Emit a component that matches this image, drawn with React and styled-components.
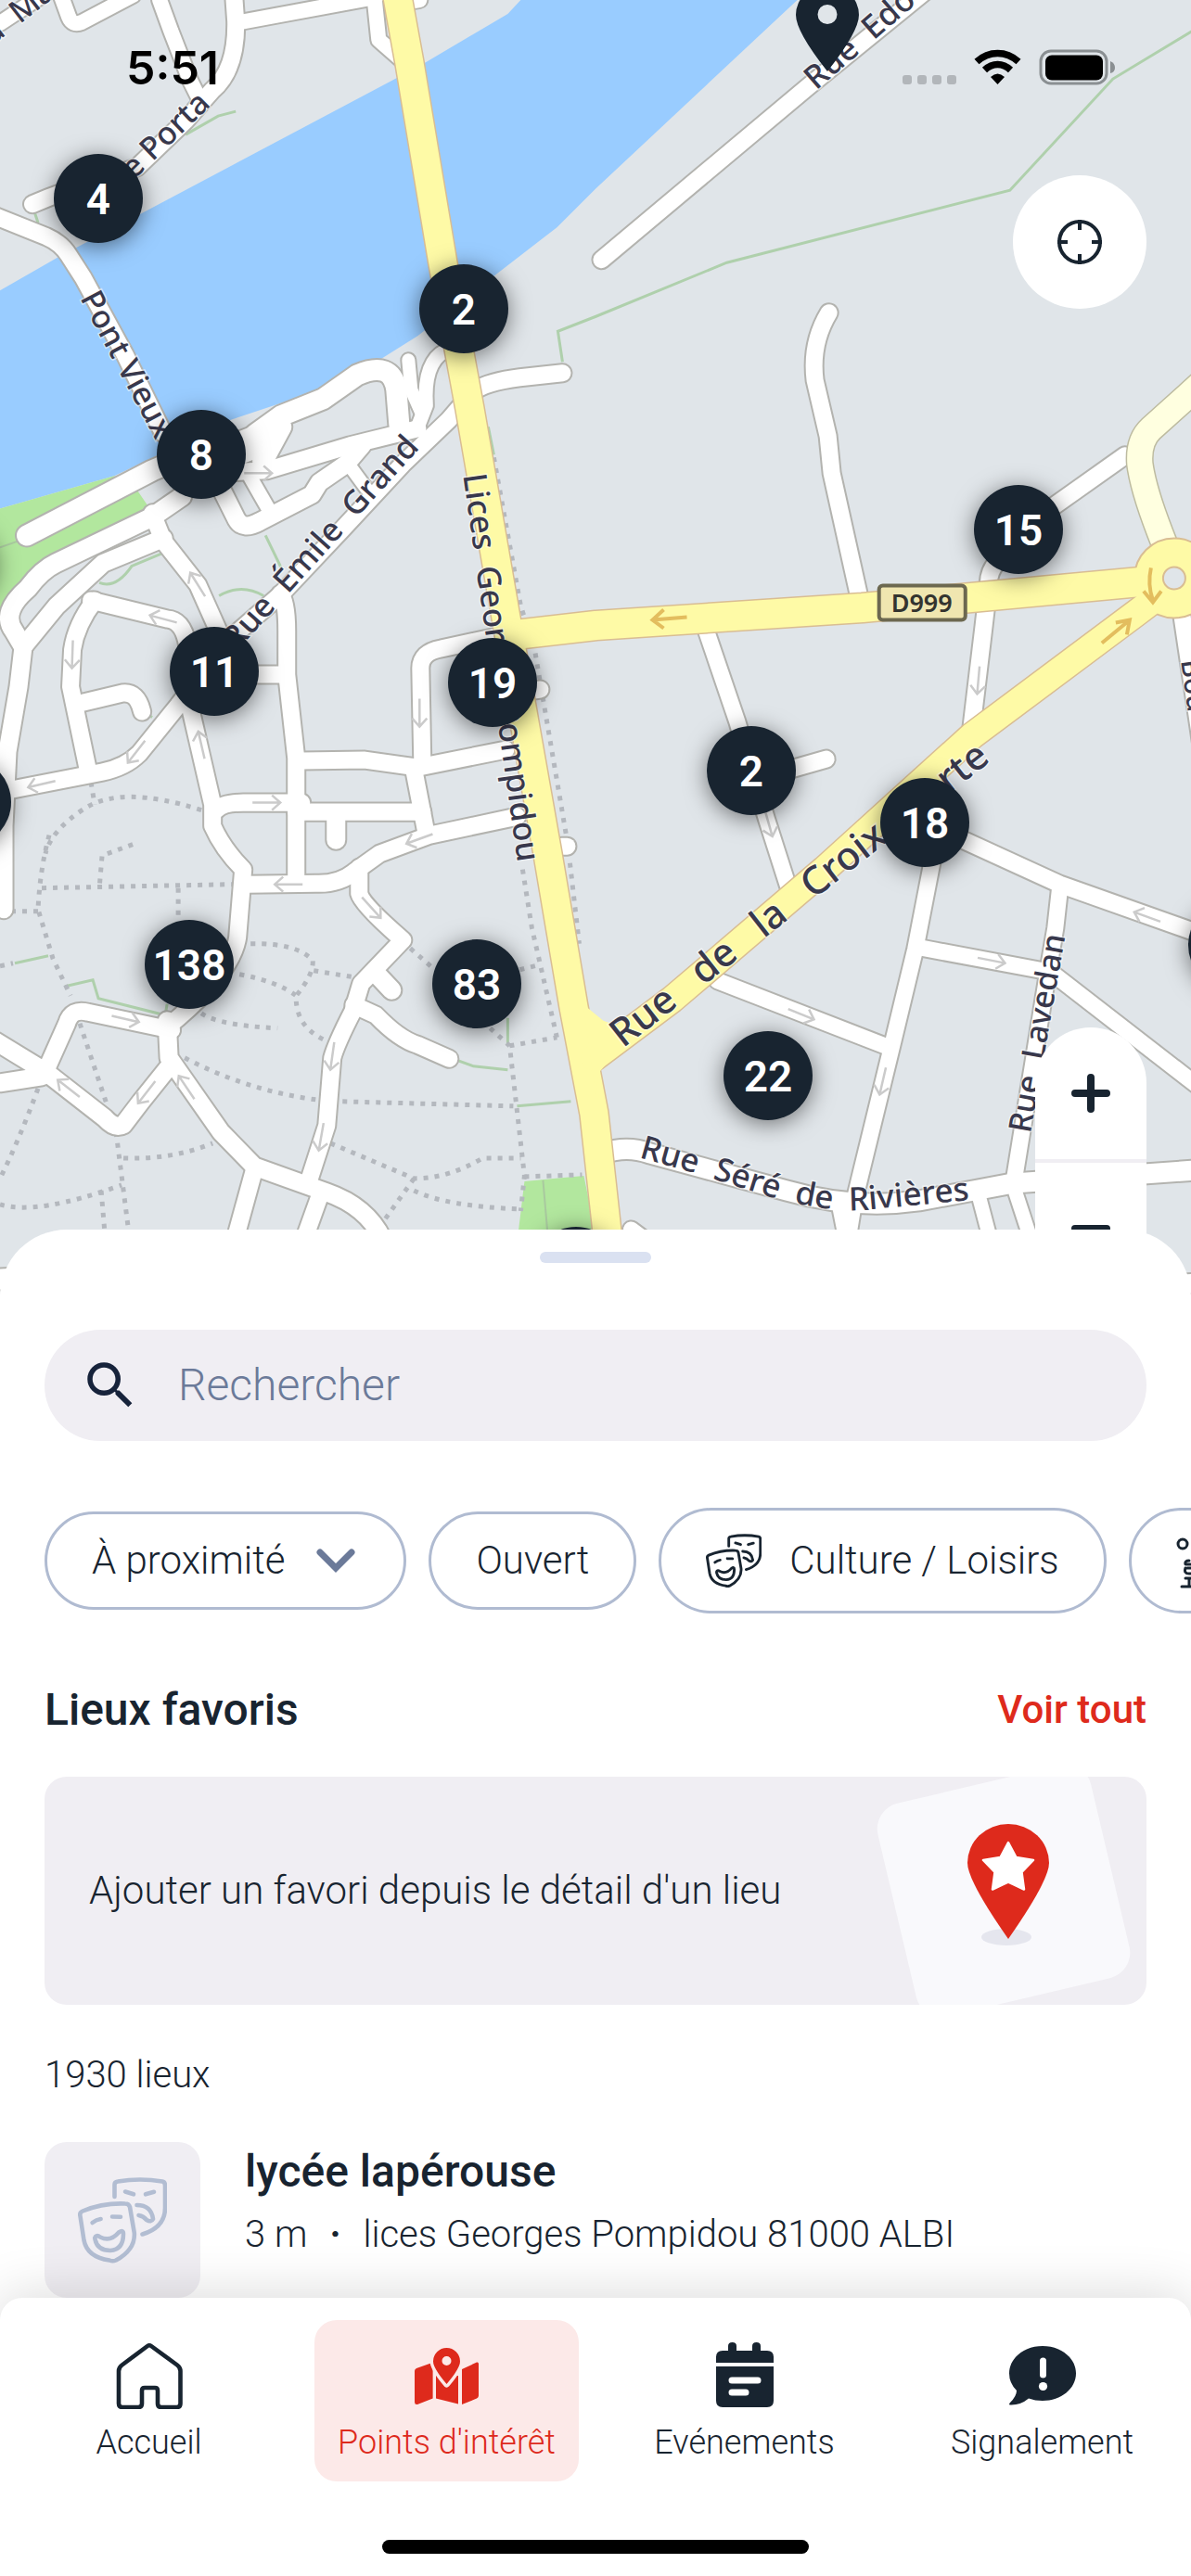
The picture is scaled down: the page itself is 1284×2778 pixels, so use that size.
import React from 'react';
import styled, { createGlobalStyle } from 'styled-components';
import { MdSearch } from 'react-icons/md';

const color = {
  ink: '#182430',
  red: '#de2a1c',
  blush: '#fce9e8',
  haze: '#f0eef3',
  line: '#b0bbd1',
  slate: '#6b7a99',
  land: '#e0e5e9',
  water: '#99ccff',
  park: '#b2e79e',
};

const GlobalStyle = createGlobalStyle`
  * { box-sizing: border-box; }
  body { margin: 0; background: #fff; }
  body, button, input {
    font-family: Roboto, "Liberation Sans", sans-serif;
    font-weight: 300;
    color: ${color.ink};
  }
  button { padding: 0; border: 0; background: none; cursor: pointer; }
`;

const Page = styled.div`
  display: flex;
  flex-direction: column;
  height: 100vh;
  overflow: hidden;
`;

/* ---------- map ---------- */

const MapArea = styled.section`
  position: relative;
  flex: 1 1 0;
  min-height: 0;
  margin-bottom: -72px;
  overflow: hidden;
  background: ${color.land};
`;

const MapSvg = styled.svg`
  display: block;
  width: 100%;
  height: 100%;
`;

const Cluster = styled.button`
  position: absolute;
  left: ${(p) => p.$x}px;
  top: ${(p) => p.$y}px;
  width: 96px;
  height: 96px;
  margin: -48px 0 0 -48px;
  padding-top: 2px;
  border-radius: 50%;
  background: ${color.ink};
  color: #fff;
  font-size: 46px;
  line-height: 94px;
  font-weight: 600;
  box-shadow: 0 4px 24px rgba(0, 0, 0, 0.5);
`;

const PinMarker = styled.button`
  position: absolute;
  left: 858px;
  top: -14px;
  width: 68px;
  height: 91px;
  svg { display: block; }
`;

const Overlay = styled.div`
  position: absolute;
  inset: 0;
  display: flex;
  flex-direction: column;
  align-items: flex-end;
`;

const StatusBar = styled.div`
  display: flex;
  align-items: center;
  justify-content: space-between;
  width: 100%;
  height: 146px;
  padding: 0 82px 0 136px;
`;

const Clock = styled.time`
  font: 600 50px/60px Inter, sans-serif;
  color: #000;
`;

const LocateButton = styled.button`
  display: grid;
  place-items: center;
  width: 144px;
  height: 144px;
  margin: 43px 48px 0 0;
  border-radius: 50%;
  background: #fff;
`;

const ZoomControl = styled.div`
  display: flex;
  flex-direction: column;
  width: 120px;
  margin: auto 48px 2px 0;
  border-radius: 60px;
  background: #fff;
  overflow: hidden;
`;

const ZoomButton = styled.button`
  display: grid;
  place-items: center;
  height: 142px;
  & + & {
    height: 146px;
    border-top: 4px solid ${color.haze};
  }
`;

/* ---------- sheet ---------- */

const Sheet = styled.main`
  position: relative;
  flex: none;
  padding: 24px 48px 0;
  border-radius: 72px 72px 0 0;
  background: #fff;
`;

const Handle = styled.div`
  width: 120px;
  height: 12px;
  margin: 0 auto 72px;
  border-radius: 6px;
  background: #dae1f1;
`;

const SearchField = styled.label`
  display: flex;
  align-items: center;
  gap: 40px;
  height: 120px;
  padding: 0 48px 0 38px;
  border-radius: 60px;
  background: ${color.haze};
  svg { flex: none; fill: #17233b; }
`;

const SearchInput = styled.input`
  flex: 1;
  min-width: 0;
  padding: 0;
  border: 0;
  outline: 0;
  background: none;
  font-size: 48px;
  line-height: 60px;
  &::placeholder { color: ${color.slate}; opacity: 1; }
`;

const Chips = styled.div`
  display: flex;
  align-items: center;
  gap: 24px;
  margin: 72px -48px 0 0;
  overflow: hidden;
`;

const Chip = styled.button`
  display: flex;
  flex: none;
  align-items: center;
  gap: 30px;
  height: ${(p) => (p.$tall ? 114 : 106)}px;
  padding: 0 48px;
  border: 3px solid ${color.line};
  border-radius: 57px;
  background: #fff;
  font-size: 42px;
  line-height: 56px;
  svg { flex: none; }
`;

const SectionHead = styled.div`
  display: flex;
  align-items: center;
  justify-content: space-between;
  margin-top: 72px;
`;

const Heading = styled.h2`
  margin: 0;
  font-size: 48px;
  line-height: 64px;
  font-weight: 500;
`;

const SeeAll = styled.a`
  color: ${color.red};
  font-size: 42px;
  line-height: 56px;
  font-weight: 500;
  text-decoration: none;
`;

const FavouriteCard = styled.div`
  display: flex;
  align-items: center;
  justify-content: space-between;
  height: 246px;
  margin-top: 40px;
  padding-left: 48px;
  border-radius: 24px;
  background: ${color.haze};
  overflow: hidden;
  font-size: 42px;
  line-height: 56px;
  svg { flex: none; }
`;

const Count = styled.p`
  margin: 48px 0 44px;
  font-size: 40px;
  line-height: 56px;
`;

const Place = styled.article`
  display: flex;
  gap: 48px;
`;

const Thumb = styled.div`
  display: grid;
  place-items: center;
  width: 168px;
  height: 168px;
  border-radius: 24px;
  background: ${color.haze};
`;

const PlaceInfo = styled.div`
  display: flex;
  flex-direction: column;
  gap: 12px;
  padding-top: 4px;
`;

const PlaceName = styled.h3`
  margin: 0;
  font-size: 48px;
  line-height: 56px;
  font-weight: 500;
`;

const PlaceMeta = styled.p`
  display: flex;
  gap: 24px;
  margin: 0;
  font-size: 40px;
  line-height: 56px;
`;

const Separator = styled.span`
  font-weight: 700;
`;

/* ---------- tab bar ---------- */

const TabBar = styled.nav`
  position: relative;
  flex: none;
  padding: 24px 0;
  border-radius: 24px 24px 0 0;
  background: #fff;
  box-shadow: 0 0 60px rgba(0, 0, 0, 0.16);
`;

const Tabs = styled.div`
  display: grid;
  grid-template-columns: repeat(4, 1fr);
`;

const Tab = styled.a`
  display: flex;
  flex-direction: column;
  align-items: center;
  gap: 12px;
  height: 174px;
  margin: 0 18px;
  padding-top: 24px;
  border-radius: 24px;
  background: ${(p) => (p.$active ? color.blush : 'transparent')};
  color: ${(p) => (p.$active ? color.red : color.ink)};
  font-size: 36px;
  line-height: 48px;
  text-decoration: none;
  white-space: nowrap;
`;

const HomeIndicator = styled.div`
  width: 460px;
  height: 15px;
  margin: 63px auto 0;
  border-radius: 8px;
  background: #000;
`;

/* ---------- map data ---------- */

const streets = [
  [16, 'M0 25L50 -8'],
  [16, 'M66 -4L74 18Q78 28 88 24L143 -5'],
  [16, 'M172 0L184 33L205 87L214 105'],
  [18, 'M252 -5L254 23Q255 75 229 97L200 130L148 180L100 197Q70 205 35 220'],
  [16, 'M258 24L405 -3'],
  [16, 'M403 -5L408 43L432 64'],
  [16, 'M440 2L452 0'],
  [18, 'M-5 233L50 255Q66 262 74 275L90 300L135 383L176 467L216 490'],
  [34, 'M240 490L283 473'],
  [22, 'M275 468L303 448L348 430L385 404Q422 388 427 420L430 457'],
  [22, 'M283 497L303 460'],
  [14, 'M440 388L443 420L455 447'],
  [15, 'M480 378Q456 390 459 437L450 460'],
  [18, 'M606 402L560 407Q520 412 508 424L483 453L434 500L369 570L303 640L246 690L192 760L150 812Q135 827 110 832L2 853'],
  [18, 'M225 510L287 507L377 480L450 462'],
  [22, 'M29 577L164 507L216 485'],
  [14, 'M373 497L395 527'],
  [19, 'M240 530L255 560Q262 572 280 562L336 533L344 520L373 500L390 480'],
  [15, 'M270 515L293 555'],
  [20, 'M196 535L164 557L60 607Q45 614 30 634Q0 660 15 680L25 697'],
  [19, 'M176 580L111 607L61 653L25 697L20 740L8 810L4 890L4 980'],
  [18, 'M164 553L176 583L213 630L242 695'],
  [18, 'M98 647L180 667Q197 668 202 695'],
  [18, 'M102 647Q82 673 78 700L76 740L94 826'],
  [18, 'M90 757L132 747Q148 745 153 767'],
  [18, 'M205 763L229 867L229 890Q240 915 262 937L256 1010Q250 1050 180 1107'],
  [18, 'M302 640Q309 648 309 680L309 727L319 817L319 947'],
  [18, 'M270 727L307 727'],
  [18, 'M325 820L393 819L450 827L545 808'],
  [18, 'M233 873Q240 865 262 865L325 865'],
  [18, 'M319 875L455 875'],
  [20, 'M362 880L362 905'],
  [18, 'M540 685L475 699Q453 703 453 720L455 822'],
  [18, 'M446 830L459 897'],
  [18, 'M557 880L463 900L409 920L381 940Q365 953 340 952L266 953'],
  [18, 'M387 935L387 963Q390 975 434 1013L389 1060L380 1090Q362 1125 358 1140L352 1213L332 1275'],
  [20, 'M406 1050L422 1067'],
  [18, 'M381 1083L405 1094Q430 1120 450 1126L484 1141'],
  [19, 'M180 1100L182 1140L238 1220L274 1257L352 1285Q395 1300 412 1335'],
  [18, 'M274 1260L252 1340'],
  [18, 'M344 1290L326 1340'],
  [18, 'M185 1110L95 1091Q77 1086 72 1103L51 1150'],
  [19, 'M184 1147L152 1187L133 1212Q124 1217 113 1205L49 1155L-5 1122'],
  [19, 'M0 1167L45 1160'],
  [22, 'M-10 1379L30 1377'],
  [20, 'M1265 1384L1300 1382'],
  [18, 'M648 280L871 93L1000 -12'],
  [18, 'M893 337Q873 370 878 410L892 470L896 510L926 645'],
  [18, 'M1212 491L1133 547L1075 605Q1065 615 1065 630L1060 673L1046 790'],
  [17, 'M761 680L794 777L826 883L849 955'],
  [18, 'M820 838L890 818'],
  [18, 'M1000 888L1142 953L1300 1009'],
  [17, 'M1006 920L986 1023L961 1127L920 1295L912 1345'],
  [17, 'M990 1021L1129 1047'],
  [17, 'M1142 955L1137 1000L1129 1047L1092 1275'],
  [17, 'M1130 1046L1290 1170'],
  [17, 'M773 1057L956 1128'],
  [21, 'M650 1243Q675 1234 700 1243L847 1283Q920 1304 990 1294L1092 1275L1290 1261'],
  [15, 'M1054 1287L1068 1340'],
  [15, 'M1094 1285L1112 1340'],
  [17, 'M905 1300L914 1345'],
  [17, 'M680 1325L700 1340'],
  [18, 'M1273 660L1294 800'],
  [18, 'M575 744L582 743'],
  [18, 'M605 912L611 912'],
];

const footpaths = [
  'M45 957L250 953', 'M53 900Q43 937 41 980L57 1033L76 1073',
  'M98 843L102 867', 'M217 873Q130 845 90 872Q55 895 49 920',
  'M143 910L110 922L107 957', 'M192 957L192 990', 'M12 982L41 982',
  'M270 1017Q320 1016 337 1035Q338 1050 319 1073Q318 1105 348 1120',
  'M258 1050Q300 1058 319 1073', 'M338 1046L381 1053', 'M217 1092Q235 1105 299 1108',
  'M199 1140Q266 1175 340 1185', 'M369 1187L553 1192', 'M442 1022L465 1042',
  'M528 1108L549 1127L565 1267L561 1305', 'M549 1127L600 1118',
  'M563 937L573 1000L600 1118', 'M614 930L624 1017', 'M532 493L561 653L576 700L610 900',
  'M86 1103L115 1190', 'M41 1173Q20 1230 0 1270', 'M125 1220L139 1330',
  'M133 1248Q185 1250 229 1232', 'M0 1298Q40 1310 131 1277', 'M109 1283L113 1330',
  'M356 1232L446 1270Q483 1270 520 1248L561 1248', 'M446 1270L414 1315',
  'M446 1283Q480 1300 561 1303', 'M565 1268L627 1266', 'M560 1045L580 1040', 'M0 1041L14 1038',
];

const hedges = [
  'M606 390L601 357L642 341L783 283L1088 205L1199 85L1290 30',
  'M200 145L235 125L254 120', 'M36 225L41 240', 'M526 460L532 490',
  'M286 577L303 612', 'M236 642Q260 628 284 642', 'M107 628Q125 635 142 610L178 595',
  'M16 1038L52 1030', 'M70 1063L100 1056L106 1076L178 1094L180 1082',
  'M491 1142L510 1149L547 1153', 'M557 1192L615 1187', 'M547 1097L547 1125', 'M155 768L164 773',
];

const oneWay = [
  [45, 845, 167], [78, 705, 92], [176, 667, 195], [213, 630, 238], [452, 768, 90],
  [287, 865, 0], [452, 904, 160], [311, 953, 180], [400, 978, 48], [135, 1098, 13],
  [358, 1138, 98], [346, 1225, 100], [201, 1172, 236], [158, 1177, 128], [74, 1173, 218],
  [217, 803, 257], [147, 810, 128], [278, 510, 0], [1068, 1035, 11], [863, 1093, 22],
  [951, 1165, 103], [1236, 988, 200], [1054, 733, 95], [828, 887, 74],
];

const labels = [
  [-8, 49, -38, 34, 'a  Ma'],
  [113, 224, -44, 34, 'Rue Porta'],
  [86, 321, 62, 34, 'Pont Vieux'],
  [255, 702, -48, 35, 'Rue  Émile  Grand'],
  [499, 512, 82, 35, 'Lices  Georges Pompidou'],
  [671, 1130, -38, 42, 'Rue   de   la   Croix   Verte'],
  [1110, 1222, -80, 34, 'Rue  Lavedan'],
  [879, 98, -41, 35, 'Rue  Edouard'],
  [1272, 712, 82, 30, 'Bou'],
];

const clusters = [
  [106, 214, '4'], [500, 333, '2'], [217, 490, '8'], [231, 724, '11'], [531, 736, '19'],
  [1098, 571, '15'], [810, 831, '2'], [997, 887, '18'], [204, 1040, '138'],
  [514, 1061, '83'], [828, 1160, '22'], [-36, 865, ''], [-52, 607, ''], [1329, 1019, ''], [621, 1371, ''],
];

const MapLabel = styled.text`
  font-family: "Noto Sans", "Open Sans", sans-serif;
  font-weight: 500;
  white-space: pre;
  fill: #38384c;
  stroke: rgba(255, 255, 255, 0.5);
  stroke-width: 3px;
  paint-order: stroke;
`;

function CityMap() {
  const yellow = [
    [30, 'M427 -10L441 67L477 283L506 440L545 665L590 920L618 1085L640 1200L662 1400'],
    [31, 'M555 684L642 674L929 655L1250 625'],
    [28, 'M1262 632L1225 660L1047 793L888 937L724 1077L640 1140'],
  ];
  return (
    <MapSvg viewBox="0 0 1284 1397" preserveAspectRatio="xMinYMin slice" aria-hidden="true">
      <rect width="1284" height="1397" fill={color.land} />
      <path fill={color.water} d="M0 313L61 278L156 228L422 87L459 67L547 15L561 0H859L642 203L600 245L534 296L450 362L407 389L340 422L250 452L123 513L0 548Z" />
      <path fill={color.park} d="M0 548L123 513L147 527L160 546L41 620L5 660L0 676Z" />
      <path fill={color.park} d="M565 1273L629 1267L655 1397H550Z" />
      <path d="M585 1272L590 1330M0 590L20 583" stroke="#a9c99f" strokeWidth="2" fill="none" />
      <g fill="none" stroke="#afd0ac" strokeWidth="3">
        {hedges.map((d) => <path key={d} d={d} />)}
      </g>
      <g fill="none" stroke="#b4b8be" strokeWidth="5" strokeDasharray="5 7">
        {footpaths.map((d) => <path key={d} d={d} />)}
      </g>
      <g fill="none" strokeLinecap="round" strokeLinejoin="round">
        {streets.map(([w, d]) => <path key={d} d={d} stroke="#b3b3af" strokeWidth={w + 4} />)}
        {streets.map(([w, d]) => <path key={d} d={d} stroke="#fff" strokeWidth={w} />)}
        <path d="M1300 408L1240 462Q1226 475 1228 500Q1232 530 1254 585" stroke="#bdbba0" strokeWidth="30" />
        <path d="M1300 408L1240 462Q1226 475 1228 500Q1232 530 1254 585" stroke="#ffffe0" strokeWidth="27" />
        {yellow.map(([w, d]) => <path key={d} d={d} stroke="#d9bd93" strokeWidth={w + 3} />)}
        <circle cx="1265" cy="623" r="43" fill="#fefaa6" stroke="#d9bd93" strokeWidth="2" />
        {yellow.map(([w, d]) => <path key={d} d={d} stroke="#fefaa6" strokeWidth={w} />)}
      </g>
      <path d="M628 1082L650 1100L684 1112L645 1156L642 1180Z" fill="#fefaa6" />
      <circle cx="1265" cy="623" r="12" fill={color.land} stroke="#d9bd93" strokeWidth="2" />
      <g fill="none" stroke="#cbcbcb" strokeWidth="2.5">
        {oneWay.map(([x, y, a]) => (
          <path key={`${x}-${y}`} transform={`translate(${x} ${y}) rotate(${a})`} d="M-15 0H15M6 -8L15 0L6 8" />
        ))}
      </g>
      <g fill="none" stroke="#e3bd5e" strokeWidth="4">
        <path d="M740 665L703 668M715 657L703 668L715 677" />
        <path d="M1187 693L1216 669M1202 671L1217 668L1214 684" />
        <path d="M1240 612Q1236 630 1242 647M1232 637L1242 649L1251 637" />
      </g>
      {labels.map(([x, y, a, size, text]) => (
        <MapLabel key={text} fontSize={size} transform={`translate(${x} ${y}) rotate(${a})`}>{text}</MapLabel>
      ))}
      <path id="sere" fill="none" d="M688 1247L748 1264L834 1291Q890 1306 929 1304L1080 1290" />
      <MapLabel fontSize="35"><textPath href="#sere">Rue  Séré  de  Rivières</textPath></MapLabel>
      <rect x="947" y="631" width="93" height="37" rx="4" fill="#f0e6b0" stroke="#6c6850" strokeWidth="4" />
      <text x="993" y="660" textAnchor="middle" fontFamily="Noto Sans, sans-serif" fontWeight="600" fontSize="27" fill="#33332f">D999</text>
    </MapSvg>
  );
}

/* ---------- icons ---------- */

const Masks = ({ size, stroke }) => (
  <svg width={size} height={size} viewBox="0 0 96 92" fill="none" stroke={stroke} strokeWidth="4.6" strokeLinecap="round" strokeLinejoin="round">
    <path d="M39.500 21V8Q39.500 5 43 4.500Q67 .5 91 4.500Q94 5 94 9V33Q94 54 69.500 61.500" />
    <path d="M51 15.500L60 18.300M73 18.300L82 15.800" />
    <path d="M63.500 30Q79 30 81 45Q79 49 74 46Q71 42 65.500 41" />
    <path d="M2.500 42Q1.500 38 5 36.500Q27 27.500 51 28.500Q55 28.500 56 32L60.800 60Q62 78 41 89.500Q37.500 91 34 89.500Q10 86 6.500 68Z" />
    <path d="M15.600 49Q20 45.500 24.600 45M37 42.500L46 42.700" />
    <path d="M19 64Q21 62 24 64.500Q35 70 44 59.500Q49 56 49 61Q49 78 35 79Q21 79 18.500 67Q18 65 19 64Z" />
  </svg>
);

const Landmark = () => (
  <svg width="60" height="60" viewBox="0 0 60 60" fill="none" stroke={color.ink} strokeWidth="3" strokeLinecap="round" strokeLinejoin="round">
    <circle cx="7" cy="12" r="5" />
    <path d="M14 30Q9 30 10 34H24M12 38H24M10 38Q8 44 14 44H24M10 49H24M14 49V57M6 58H54" />
  </svg>
);

const Chevron = () => (
  <svg width="50" height="42" viewBox="5 0 50 42" fill="none" stroke={color.slate} strokeWidth="7" strokeLinecap="round">
    <path d="M13 12L30 29L47 12" />
  </svg>
);

const StatusIcons = () => (
  <svg width="229" height="40" viewBox="0 0 229 40" aria-label="Wi-Fi, batterie pleine" role="img">
    <g fill="#b2b6ba">
      <rect x="0" y="28" width="10" height="10" rx="3" />
      <rect x="16" y="28" width="10" height="10" rx="3" />
      <rect x="32" y="28" width="10" height="10" rx="3" />
      <rect x="48" y="28" width="10" height="10" rx="3" />
    </g>
    <g fill="none" stroke="#000" strokeWidth="7.5">
      <path d="M80 13.500Q90 4.500 102.500 4.500T125 13.500" />
      <path d="M88.500 22.500Q95 16.500 102.500 16.500T116.500 22.500" />
    </g>
    <path d="M102.500 38L95 30Q102.500 23 110 30Z" fill="#000" />
    <rect x="149" y="2" width="71" height="35" rx="11" fill="none" stroke="#8a8f92" strokeWidth="3" />
    <rect x="154" y="6.500" width="62" height="27" rx="7" fill="#000" />
    <path d="M224 13Q229 15 229 20T224 26Z" fill="#8a8f92" />
  </svg>
);

const FavouriteArt = () => (
  <svg width="308" height="246" viewBox="0 0 308 246" aria-hidden="true">
    <rect x="36" y="5" width="236" height="236" rx="28" fill="#f9f9fc" transform="rotate(-13.300 154 123)" />
    <ellipse cx="157" cy="173" rx="27" ry="9" fill="#e5e6ee" />
    <path d="M159 175Q115 112 115 93A44 42 0 0 1 203 93Q203 112 159 175Z" fill={color.red} />
    <path d="M159 71L167.500 87L186 90L173.500 103L176 121.500L159 113.500L142 121.500L144.500 103L132 90L150.500 87Z" fill="#fff" stroke="#fff" strokeWidth="2.500" strokeLinejoin="round" />
  </svg>
);

const HomeIcon = () => (
  <svg width="72" height="72" viewBox="0 0 72 72" fill="none" stroke="currentColor" strokeWidth="4.600" strokeLinejoin="round">
    <path d="M38 4L66 24.500Q69.500 27 69.500 31V66Q69.500 70 65.500 70H49Q45 70 45 66V52Q45 49 42 49H31Q28 49 28 52V66Q28 70 24 70H7Q3 70 3 66V31Q3 27 6.500 24.500L34 4Q36 2.500 38 4Z" />
  </svg>
);

const MapIcon = () => (
  <svg width="72" height="72" viewBox="-1 -6 72 72" fill="currentColor">
    <path d="M0 25Q0 23 2 22L17.500 16.500L19.600 18V54.500L3 61Q0 61.500 0 58.500ZM23 30H47V60.500L23 54.500ZM51 23L67 15.500Q69 15 69 17.500V51.500Q69 53.500 67 54.500L51 61Z" />
    <path d="M34.500 39Q20 22 20 14.500A14.500 14.500 0 0 1 49 14.500Q49 22 34.500 39Z" fill={color.blush} stroke={color.blush} strokeWidth="7" strokeLinejoin="round" />
    <path fillRule="evenodd" d="M34.500 39Q20 22 20 14.500A14.500 14.500 0 0 1 49 14.500Q49 22 34.500 39ZM34.500 9A5 5 0 1 0 34.500 19A5 5 0 1 0 34.500 9Z" />
  </svg>
);

const EventIcon = () => (
  <svg width="72" height="72" viewBox="0 0 72 72" fill="currentColor">
    <path d="M5 22V16Q5 9 12 9H18V4Q18 0 22.500 0T27 4V9H44V4Q44 0 48.500 0T53 4V9H60Q67 9 67 16V22ZM5 26H67V63Q67 70 60 70H12Q5 70 5 63Z" />
    <path d="M22 41H50M22 54H37" stroke="#fff" strokeWidth="7" strokeLinecap="round" />
  </svg>
);

const ReportIcon = () => (
  <svg width="72" height="72" viewBox="0 0 72 72" fill="currentColor">
    <path d="M36 4C56 4 72 17 72 33.500S56 63 36 63Q28 63 21 60.500Q12 68 1 67.500Q-1 67 1 65Q8 58 8 52Q0 44 0 33.500C0 17 16 4 36 4Z" />
    <path d="M36.500 20V35" stroke="#fff" strokeWidth="7" strokeLinecap="round" />
    <circle cx="36.500" cy="47.500" r="4.600" fill="#fff" />
  </svg>
);

const tabs = [
  { label: 'Accueil', Icon: HomeIcon },
  { label: "Points d'intérêt", Icon: MapIcon, active: true },
  { label: 'Evénements', Icon: EventIcon },
  { label: 'Signalement', Icon: ReportIcon },
];

export default function App() {
  return (
    <Page>
      <GlobalStyle />
      <MapArea aria-label="Carte">
        <CityMap />
        {clusters.map(([x, y, n]) => (
          <Cluster key={`${x}-${y}`} $x={x} $y={y} aria-label={n ? `${n} lieux` : 'Lieux'}>{n}</Cluster>
        ))}
        <PinMarker aria-label="Lieu">
          <svg width="68" height="91" viewBox="0 0 68 91">
            <path fillRule="evenodd" fill={color.ink} d="M34 91Q0 48 0 30A34 32 0 0 1 68 30Q68 48 34 91ZM34 19A10.500 10.500 0 1 0 34 40A10.500 10.500 0 1 0 34 19Z" />
          </svg>
        </PinMarker>
        <Overlay>
          <StatusBar>
            <Clock>5:51</Clock>
            <StatusIcons />
          </StatusBar>
          <LocateButton aria-label="Me localiser">
            <svg width="48" height="48" viewBox="0 0 48 48" fill="none" stroke={color.ink} strokeWidth="4">
              <circle cx="24" cy="24" r="22" />
              <path d="M24 0V11M24 37V48M0 24H11M37 24H48" />
            </svg>
          </LocateButton>
          <ZoomControl>
            <ZoomButton aria-label="Zoomer">
              <svg width="42" height="42" viewBox="0 0 42 42" stroke={color.ink} strokeWidth="8" strokeLinecap="round">
                <path d="M4 21H38M21 4V38" />
              </svg>
            </ZoomButton>
            <ZoomButton aria-label="Dézoomer">
              <svg width="42" height="42" viewBox="0 0 42 42" stroke={color.ink} strokeWidth="8" strokeLinecap="round">
                <path d="M4 21H38" />
              </svg>
            </ZoomButton>
          </ZoomControl>
        </Overlay>
      </MapArea>

      <Sheet>
        <Handle />
        <SearchField>
          <MdSearch size={66} aria-hidden="true" />
          <SearchInput type="search" placeholder="Rechercher" aria-label="Rechercher" />
        </SearchField>
        <Chips>
          <Chip>À proximité<Chevron /></Chip>
          <Chip>Ouvert</Chip>
          <Chip $tall><Masks size={60} stroke={color.ink} />Culture / Loisirs</Chip>
          <Chip $tall aria-label="Tourisme"><Landmark /></Chip>
        </Chips>
        <SectionHead>
          <Heading>Lieux favoris</Heading>
          <SeeAll href="#favoris">Voir tout</SeeAll>
        </SectionHead>
        <FavouriteCard>
          <span>Ajouter un favori depuis le détail d'un lieu</span>
          <FavouriteArt />
        </FavouriteCard>
        <Count>1930 lieux</Count>
        <Place>
          <Thumb><Masks size={96} stroke="#b2bdd2" /></Thumb>
          <PlaceInfo>
            <PlaceName>lycée lapérouse</PlaceName>
            <PlaceMeta>
              <span>3 m</span>
              <Separator>·</Separator>
              <span>lices Georges Pompidou 81000 ALBI</span>
            </PlaceMeta>
          </PlaceInfo>
        </Place>
      </Sheet>

      <TabBar>
        <Tabs>
          {tabs.map(({ label, Icon, active }) => (
            <Tab key={label} href="#" $active={active} aria-current={active ? 'page' : undefined}>
              <Icon />
              {label}
            </Tab>
          ))}
        </Tabs>
        <HomeIndicator />
      </TabBar>
    </Page>
  );
}
